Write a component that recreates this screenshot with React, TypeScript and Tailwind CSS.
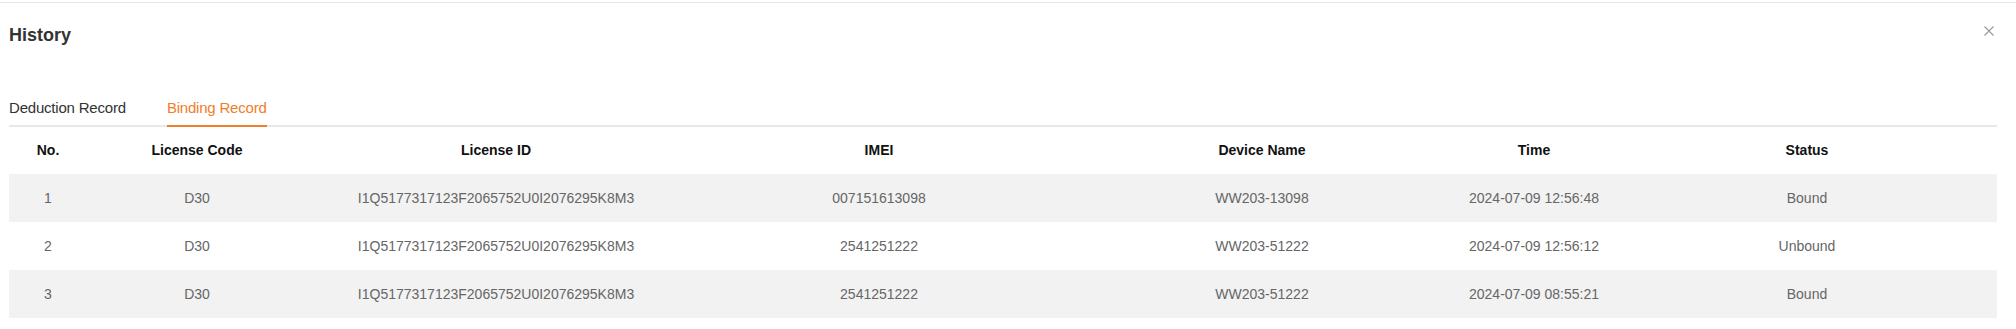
import React from 'react';

type BindingRow = {
  no: number;
  code: string;
  licenseId: string;
  imei: string;
  device: string;
  time: string;
  status: string;
};

const rows: BindingRow[] = [
  {
    no: 1,
    code: 'D30',
    licenseId: 'I1Q5177317123F2065752U0I2076295K8M3',
    imei: '007151613098',
    device: 'WW203-13098',
    time: '2024-07-09 12:56:48',
    status: 'Bound',
  },
  {
    no: 2,
    code: 'D30',
    licenseId: 'I1Q5177317123F2065752U0I2076295K8M3',
    imei: '2541251222',
    device: 'WW203-51222',
    time: '2024-07-09 12:56:12',
    status: 'Unbound',
  },
  {
    no: 3,
    code: 'D30',
    licenseId: 'I1Q5177317123F2065752U0I2076295K8M3',
    imei: '2541251222',
    device: 'WW203-51222',
    time: '2024-07-09 08:55:21',
    status: 'Bound',
  },
];

const columns = ['No.', 'License Code', 'License ID', 'IMEI', 'Device Name', 'Time', 'Status'];

function CloseIcon(): JSX.Element {
  return (
    <svg width="10" height="10" viewBox="0 0 10 10" fill="none" stroke="#9a9a9a" strokeWidth="1.1">
      <path d="M0.5 0.5 L9.5 9.5 M9.5 0.5 L0.5 9.5" />
    </svg>
  );
}

function Tabs(): JSX.Element {
  return (
    <div className="flex border-b-2 border-[#e8e8e8] mt-[51px]">
      <button className="mr-[41px] pb-[7px] text-[15px] leading-[20px] tracking-[-0.2px] text-[#333333]">
        Deduction Record
      </button>
      <button className="-mb-[2px] pb-[7px] border-b-2 border-[#ef7e2c] text-[15px] leading-[20px] tracking-[-0.2px] text-[#ef7e2c]">
        Binding Record
      </button>
    </div>
  );
}

function BindingTable(): JSX.Element {
  return (
    <table className="w-full table-fixed border-collapse text-[14px]">
      <colgroup>
        <col className="w-[78px]" />
        <col className="w-[220px]" />
        <col className="w-[378px]" />
        <col className="w-[388px]" />
        <col className="w-[378px]" />
        <col className="w-[166px]" />
        <col />
      </colgroup>
      <thead>
        <tr className="h-[47px]">
          {columns.map((c) => (
            <th key={c} className="font-bold text-[#111111] text-center align-middle p-0">
              {c}
            </th>
          ))}
        </tr>
      </thead>
      <tbody>
        {rows.map((r, i) => (
          <tr key={r.no} className={i % 2 === 0 ? 'h-[48px] bg-[#f2f2f2]' : 'h-[48px] bg-white'}>
            <td className="text-center text-[#666666] p-0">{r.no}</td>
            <td className="text-center text-[#666666] p-0">{r.code}</td>
            <td className="text-center text-[#666666] p-0">{r.licenseId}</td>
            <td className="text-center text-[#666666] p-0">{r.imei}</td>
            <td className="text-center text-[#666666] p-0">{r.device}</td>
            <td className="text-center text-[#666666] p-0">{r.time}</td>
            <td className="text-center text-[#666666] p-0">{r.status}</td>
          </tr>
        ))}
      </tbody>
    </table>
  );
}

export default function App(): JSX.Element {
  return (
    <div className="w-[2016px] h-[329px] bg-white overflow-hidden font-['Liberation_Sans',Arial,sans-serif]">
      <div className="mt-[2px] border-t border-[#e6e6e6] pl-[9px] pr-[19px]">
        <div className="flex justify-between items-start pt-[20px]">
          <h2 className="text-[18px] leading-[24px] font-bold text-[#333333]">History</h2>
          <button className="mt-[3px] mr-[3px] p-0">
            <CloseIcon />
          </button>
        </div>
        <Tabs />
        <BindingTable />
      </div>
    </div>
  );
}
